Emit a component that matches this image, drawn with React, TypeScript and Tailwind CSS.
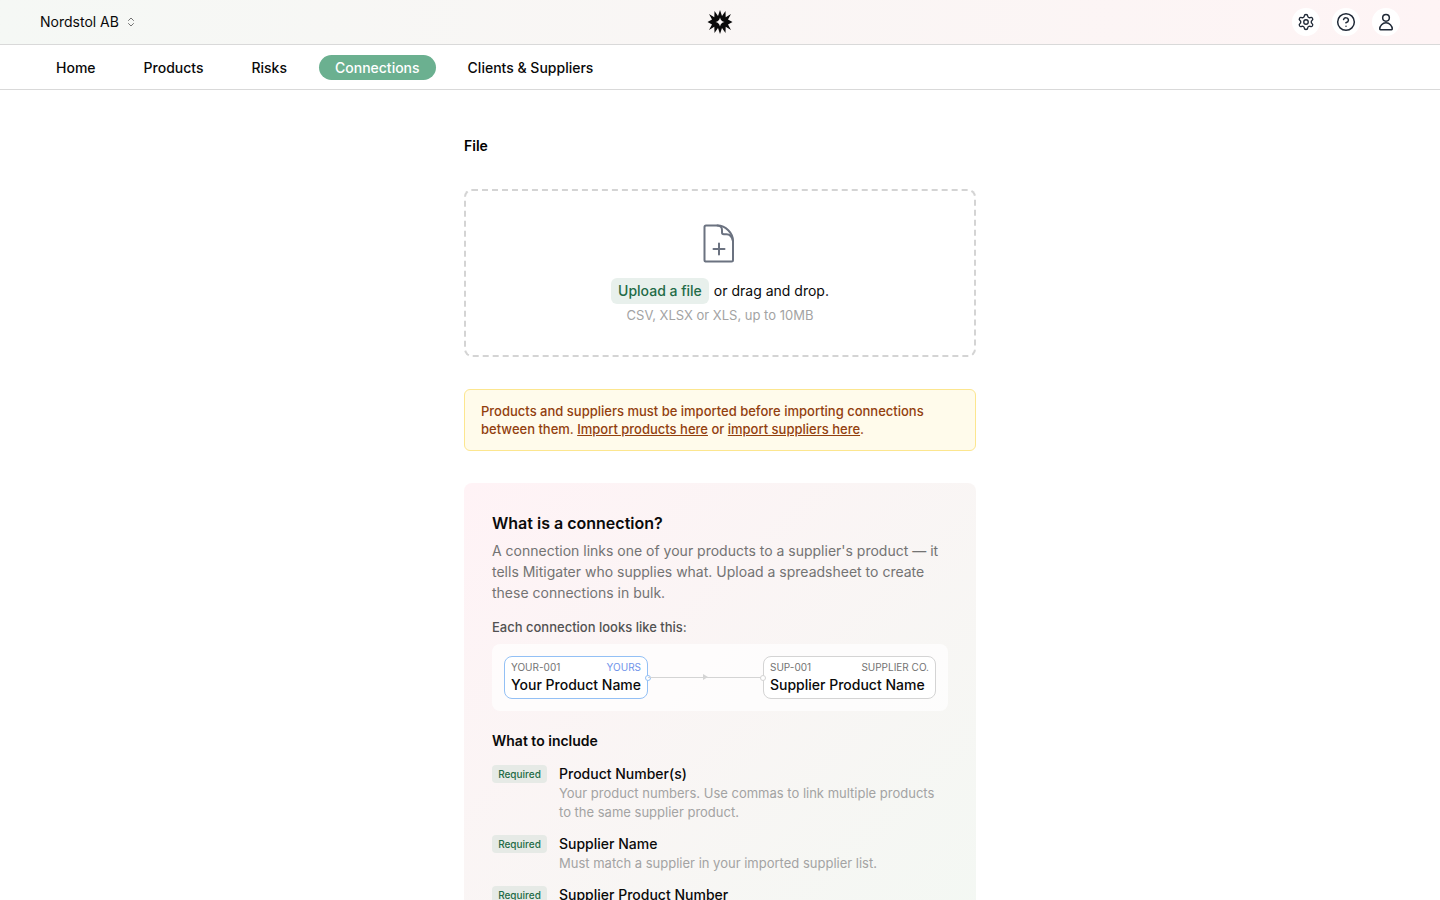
import { ChevronsUpDown, CircleHelp, Settings } from 'lucide-react'
import type { ReactNode } from 'react'

const NAV_ITEMS = ['Home', 'Products', 'Risks', 'Connections', 'Clients & Suppliers']

function Logo() {
  return (
    <svg width="26" height="26" viewBox="0 0 26 26" fill="#0a0a0a">
      <path
        fillRule="evenodd"
        d="M13 1l2 6 3.5-5 .2 6.2L24 5l-3 5.400 4.500 2.600-4.500 2.600L24 21l-5.300-3.200-.2 6.200L15 19l-2 6-2-6-3.500 5-.2-6.200L2 21l3-5.400L.5 13 5 10.400 2 5l5.300 3.200L7.500 2 11 7zM13 8.500c-.6 2.600-1.900 3.900-4.500 4.500 2.600.6 3.900 1.900 4.500 4.500.6-2.600 1.900-3.900 4.500-4.500-2.600-.6-3.900-1.900-4.500-4.500z"
      />
    </svg>
  )
}

function UserIcon() {
  return (
    <svg width="20" height="20" viewBox="0 0 24 24" fill="none" stroke="#1f2937" strokeWidth="1.8" strokeLinecap="round" strokeLinejoin="round">
      <circle cx="12" cy="7" r="4" />
      <path d="M4.500 20.500a7.500 7.500 0 0 1 15 0c0 .5-.3.800-.8.800H5.300c-.5 0-.8-.3-.8-.8z" />
    </svg>
  )
}

function FilePlusIcon() {
  return (
    <svg width="44" height="44" viewBox="0 0 44 44" fill="none" stroke="#6b7280" strokeWidth="2" strokeLinecap="round" strokeLinejoin="round">
      <path d="M8 4.500h11.500c8 0 15.500 7.500 15.500 15.500v19a1.500 1.500 0 0 1-1.500 1.500h-26A1.500 1.500 0 0 1 6.500 39V6A1.500 1.500 0 0 1 8 4.500z" />
      <path d="M19.500 4.500c2.800 0 4.500 2 4.500 4.500v2.500c0 1 .8 1.800 1.800 1.800h2.700c3 0 5.500 2.500 6.500 6.700" />
      <path d="M21 22.500v11M15.500 28h11" />
    </svg>
  )
}

function HeaderButton({ children }: { children: ReactNode }) {
  return <div className="flex h-7 w-7 items-center justify-center rounded-full bg-white">{children}</div>
}

function ConnectionNode({
  code,
  tag,
  name,
  blue,
}: {
  code: string
  tag: string
  name: string
  blue?: boolean
}) {
  return (
    <div className={`w-full rounded-lg border bg-white px-[6px] pb-[3px] pt-[3px] ${blue ? 'border-[#93c0f5]' : 'border-[#d4d4d4]'}`}>
      <div className="flex items-center justify-between text-[10px] leading-[15px]">
        <span className="text-[#737373]">{code}</span>
        <span className={blue ? 'text-[#6f93ea]' : 'text-[#737373]'}>{tag}</span>
      </div>
      <div className="truncate text-sm font-medium leading-[20px] text-[#0a0a0a]">{name}</div>
    </div>
  )
}

function Field({ name, children }: { name: string; children: ReactNode }) {
  return (
    <div className="flex items-start gap-3">
      <span className="mt-[1px] flex h-[18px] w-[55px] shrink-0 items-center justify-center rounded bg-[#e6eae6] text-[10px] font-medium text-[#1f6b47]">
        Required
      </span>
      <div className="min-w-0">
        <div className="text-sm font-medium leading-[20px] text-[#0a0a0a]">{name}</div>
        <div className="text-[13px] leading-[19px] text-[#a3a3a3]">{children}</div>
      </div>
    </div>
  )
}

export default function App() {
  return (
    <div className="h-screen overflow-hidden bg-white font-['Inter',sans-serif] text-[#0a0a0a]">
      <header className="flex h-[45px] items-center justify-between border-b border-[#d9d9d9] bg-gradient-to-r from-[#f5f8f5] to-[#fef4f5] pl-10 pr-[40px]">
        <div className="flex w-[200px] items-center gap-[6px] text-sm">
          Nordstol AB
          <ChevronsUpDown size={12} className="text-[#737373]" />
        </div>
        <Logo />
        <div className="flex w-[200px] items-center justify-end gap-3">
          <HeaderButton><Settings size={18} strokeWidth={1.8} className="text-[#1f2937]" /></HeaderButton>
          <HeaderButton><CircleHelp size={20} strokeWidth={1.8} className="text-[#1f2937]" /></HeaderButton>
          <HeaderButton><UserIcon /></HeaderButton>
        </div>
      </header>

      <nav className="flex h-[45px] items-center gap-4 border-b border-[#d9d9d9] px-10">
        {NAV_ITEMS.map((item) => (
          <a
            key={item}
            className={`rounded-full px-4 text-sm font-medium leading-[25px] ${item === 'Connections' ? 'bg-[#6bb090] text-white' : 'text-[#0a0a0a]'}`}
          >
            {item}
          </a>
        ))}
      </nav>

      <main className="mx-auto w-[512px] pt-[46px]">
        <h2 className="text-sm font-semibold leading-[20px] text-black">File</h2>

        <div className="mt-[33px] flex h-[168px] flex-col items-center rounded-lg border-2 border-dashed border-[#d4d4d4] pt-[30px]">
          <FilePlusIcon />
          <div className="mt-[13px] flex items-center text-sm">
            <span className="rounded-md bg-[#e8f0ec] px-[7px] py-[3px] font-medium leading-[20px] text-[#1f6b47]">Upload a file</span>
            <span className="ml-[5px]">or drag and drop.</span>
          </div>
          <p className="mt-[1px] text-[13px] leading-[20px] text-[#a3a3a3]">CSV, XLSX or XLS, up to 10MB</p>
        </div>

        <div className="mt-8 rounded-md border border-[#fce68f] bg-[#fffbeb] px-4 py-3 text-[13px] font-medium leading-[18px] text-[#92400e]">
          Products and suppliers must be imported before importing connections between them.{' '}
          <a className="underline">Import products here</a> or <a className="underline">import suppliers here</a>.
        </div>

        <section className="mt-8 rounded-lg bg-gradient-to-br from-[#fff3f6] to-[#f3f8f3] px-7 pb-8 pt-[28px]">
          <h3 className="text-base font-semibold leading-[24px] text-[#0a0a0a]">What is a connection?</h3>
          <p className="mt-[5px] text-sm leading-[21px] text-[#737373]">
            A connection links one of your products to a supplier's product — it tells Mitigater who supplies what. Upload a spreadsheet to create these connections in bulk.
          </p>
          <p className="mt-[14px] text-[13px] font-medium leading-[20px] text-[#525252]">Each connection looks like this:</p>

          <div className="mt-[7px] flex items-center rounded-lg bg-white/70 px-3 py-3">
            <div className="relative w-[144px] shrink-0">
              <ConnectionNode code="YOUR-001" tag="YOURS" name="Your Product Name" blue />
              <span className="absolute right-[-3px] top-[19px] h-[6px] w-[6px] rounded-full border border-[#93c0f5] bg-white" />
            </div>
            <div className="relative h-px flex-1 bg-[#d4d4d4]">
              <span className="absolute left-[55px] top-[-3px] h-0 w-0 border-y-[3.500px] border-l-[5px] border-y-transparent border-l-[#d4d4d4]" />
            </div>
            <div className="relative w-[173px] shrink-0">
              <span className="absolute left-[-3px] top-[19px] h-[6px] w-[6px] rounded-full border border-[#d4d4d4] bg-white" />
              <ConnectionNode code="SUP-001" tag="SUPPLIER CO." name="Supplier Product Name" />
            </div>
          </div>

          <h4 className="mt-5 text-sm font-semibold leading-[20px] text-[#0a0a0a]">What to include</h4>
          <div className="mt-[13px] flex flex-col gap-3">
            <Field name="Product Number(s)">Your product numbers. Use commas to link multiple products to the same supplier product.</Field>
            <Field name="Supplier Name">Must match a supplier in your imported supplier list.</Field>
            <Field name="Supplier Product Number">The supplier's number for the product.</Field>
          </div>
        </section>
      </main>
    </div>
  )
}
